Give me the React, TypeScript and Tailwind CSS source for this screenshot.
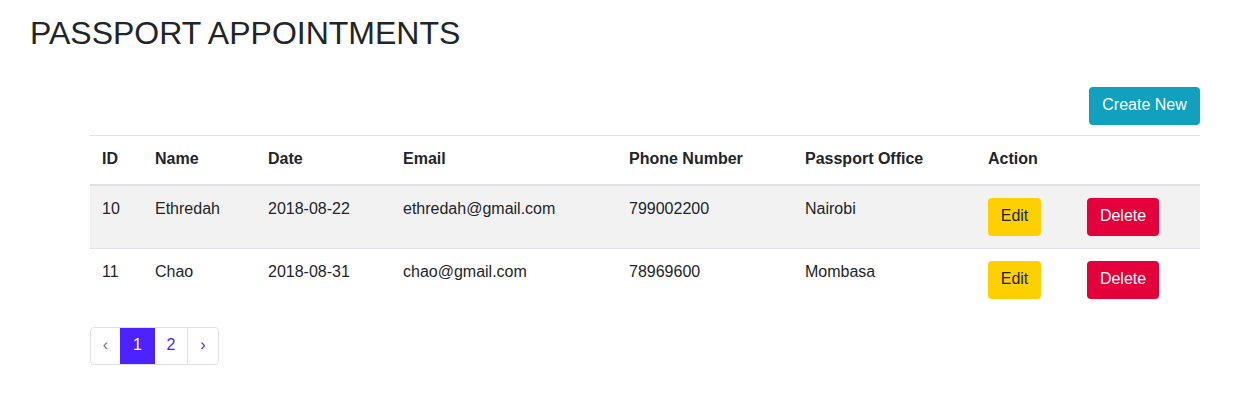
import React from "react";

type Appointment = {
	id: number;
	name: string;
	date: string;
	email: string;
	phone: string;
	office: string;
};

const appointments: Appointment[] = [
	{ id: 10, name: "Ethredah", date: "2018-08-22", email: "ethredah@gmail.com", phone: "799002200", office: "Nairobi" },
	{ id: 11, name: "Chao", date: "2018-08-31", email: "chao@gmail.com", phone: "78969600", office: "Mombasa" },
];

const headers = [
	{ label: "ID", w: "w-[53px]" },
	{ label: "Name", w: "w-[113px]" },
	{ label: "Date", w: "w-[135px]" },
	{ label: "Email", w: "w-[226px]" },
	{ label: "Phone Number", w: "w-[176px]" },
	{ label: "Passport Office", w: "w-[183px]" },
	{ label: "Action", w: "w-[99px]" },
	{ label: "", w: "w-[125px]" },
];

// text cells sit a pixel higher than the buttons
const cell = "px-3 pt-[11px] pb-[13px] align-top";

export default function App() {
	return (
		<div className="min-h-screen bg-white text-[#212529] font-['Liberation_Sans',Arial,sans-serif]">
			<h2 className="pl-[30px] pt-[14px] text-[32px] leading-[38px] font-normal">
				PASSPORT APPOINTMENTS
			</h2>

			<div className="mx-[90px] mt-[35px] w-[1110px]">
				<div className="flex justify-end">
					<button className="h-[38px] w-[111px] pb-[2px] rounded-[4px] bg-[#11a0bd] text-white text-base leading-6">
						Create New
					</button>
				</div>

				<table className="mt-[10px] w-full table-fixed border-collapse text-base leading-6">
					<thead>
						<tr className="border-t border-[#dee2e6]">
							{headers.map((h) => (
								<th
									key={h.label || "blank"}
									className={`${h.w} ${cell} text-left font-bold border-b-2 border-[#dee2e6]`}
								>
									{h.label}
								</th>
							))}
						</tr>
					</thead>
					<tbody>
						{appointments.map((a, i) => (
							<tr
								key={a.id}
								className={`border-t border-[#dee2e6] ${i % 2 === 0 ? "bg-[#f2f2f2]" : "bg-white"}`}
							>
								<td className={cell}>{a.id}</td>
								<td className={cell}>{a.name}</td>
								<td className={cell}>{a.date}</td>
								<td className={cell}>{a.email}</td>
								<td className={cell}>{a.phone}</td>
								<td className={cell}>{a.office}</td>
								<td className="p-3 align-top">
									<button className="h-[38px] w-[53px] pb-[2px] rounded-[4px] bg-[#ffd000] text-[#212529]">
										Edit
									</button>
								</td>
								<td className="p-3 align-top">
									<button className="h-[38px] w-[72px] pb-[2px] rounded-[4px] bg-[#e4003a] text-white">
										Delete
									</button>
								</td>
							</tr>
						))}
					</tbody>
				</table>

				<nav className="mt-[16px] flex">
					<ul className="flex h-[38px] border border-[#dee2e6] rounded-[4px] overflow-hidden text-base">
						<li className="w-[29px] pb-[2px] flex items-center justify-center text-[#6c757d]">‹</li>
						<li className="w-[35px] pb-[2px] flex items-center justify-center bg-[#4d22ff] text-white">1</li>
						<li className="w-[33px] pb-[2px] flex items-center justify-center text-[#4d22ff] border-r border-[#dee2e6]">2</li>
						<li className="w-[30px] pb-[2px] flex items-center justify-center text-[#4d22ff]">›</li>
					</ul>
				</nav>
			</div>
		</div>
	);
}
